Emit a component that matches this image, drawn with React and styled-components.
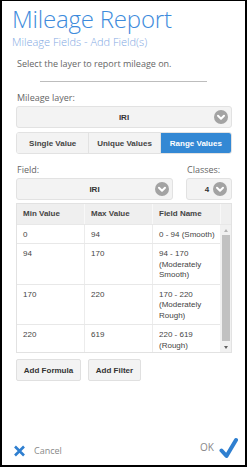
import React from "react";
import styled, { createGlobalStyle } from "styled-components";

const Global = createGlobalStyle`
  html, body { margin: 0; padding: 0; background: #fff; }
  * { box-sizing: border-box; }
`;

const Frame = styled.div`
  width: 247px;
  height: 467px;
  border: 2px solid #000;
  border-top-width: 1px;
  display: flex;
  flex-direction: column;
  background: #fff;
  font-family: "Liberation Sans", Arial, sans-serif;
  overflow: hidden;
`;

const Header = styled.div`
  padding: 3px 0 0 10px;
  font-family: "Open Sans", sans-serif;
  flex: none;
`;

const Title = styled.h1`
  margin: 0;
  font-weight: 300;
  font-size: 24px;
  line-height: 30px;
  color: #3d8bdc;
  letter-spacing: -0.2px;
`;

const Subtitle = styled.div`
  font-size: 11px;
  line-height: 16px;
  color: #82a9e3;
  font-weight: 300;
`;

const Body = styled.div`
  padding: 0 13px 0 14px;
  display: flex;
  flex-direction: column;
  flex: none;
  & > * { flex-shrink: 0; }
`;

const Intro = styled.div`
  font-family: "Open Sans", sans-serif;
  font-size: 9px;
  line-height: 14px;
  color: #666;
  margin-top: 7px;
  padding-left: 1px;
`;

const Rule = styled.div`
  height: 1px;
  background: #bdbdbd;
  margin: 10px 25px 0 24px;
`;

const Label = styled.div`
  font-family: "Open Sans", sans-serif;
  font-size: 9px;
  line-height: 14px;
  color: #666;
  padding-left: 1px;
  margin-top: ${(p) => p.$mt || 0}px;
`;

const Select = styled.div`
  position: relative;
  flex-shrink: 0;
  height: 22px;
  width: ${(p) => (p.$w ? `${p.$w}px` : "100%")};
  background: #f3f3f3;
  border: 1px solid #e2e2e2;
  border-radius: 3px;
  display: flex;
  align-items: center;
  justify-content: center;
  font-size: 8px;
  font-weight: bold;
  color: #333;
  padding-right: ${(p) => p.$pr || 0}px;
  margin-top: ${(p) => p.$mt || 0}px;
`;

const ChevronWrap = styled.span`
  position: absolute;
  right: ${(p) => p.$r || 3}px;
  top: 50%;
  transform: translateY(-50%);
  width: 14px;
  height: 14px;
  display: flex;
`;

const Chevron = ({ r }) => (
  <ChevronWrap $r={r}>
    <svg width="14" height="14" viewBox="0 0 14 14">
      <circle cx="7" cy="7" r="7" fill="#a3a3a3" />
      <path d="M4 5.8 L7 8.8 L10 5.8" fill="none" stroke="#fff" strokeWidth="2" strokeLinecap="round" strokeLinejoin="round" />
    </svg>
  </ChevronWrap>
);

const Segments = styled.div`
  display: grid;
  grid-template-columns: 1fr 1fr 1fr;
  margin-top: 4px;
  height: 22px;
  border: 1px solid #e2e2e2;
  border-radius: 3px;
  overflow: hidden;
`;

const Segment = styled.div`
  display: flex;
  align-items: center;
  justify-content: center;
  font-size: 8px;
  font-weight: bold;
  color: ${(p) => (p.$active ? "#fff" : "#444")};
  background: ${(p) => (p.$active ? "#3388d4" : "#f3f3f3")};
  border-left: ${(p) => (p.$first ? "none" : "1px solid #e2e2e2")};
`;

const FieldRow = styled.div`
  display: flex;
  gap: 13px;
  margin-top: 9px;
`;

const FieldCol = styled.div`
  display: flex;
  flex-direction: column;
  flex: ${(p) => (p.$grow ? 1 : "none")};
`;

const Table = styled.div`
  margin-top: 3px;
  border: 1px solid #e2e2e2;
  height: 150px;
  display: flex;
  flex-direction: column;
  overflow: hidden;
`;

const Row = styled.div`
  display: grid;
  grid-template-columns: 68px 68px 68px 1fr;
  border-bottom: 1px solid #e8e8e8;
  background: #efefef;
  flex: none;
`;

const Cell = styled.div`
  padding: ${(p) => (p.$head ? "5px 4px 4px 6px" : "5px 4px 3px 6px")};
  font-size: 8px;
  line-height: 10.5px;
  color: #444;
  font-weight: ${(p) => (p.$head ? "bold" : "normal")};
  border-right: 1px solid ${(p) => (p.$head ? "#f8f8f8" : "#ececec")};
`;

const BodyArea = styled.div`
  display: flex;
  flex: 1;
  min-height: 0;
`;

const Rows = styled.div`
  flex: 1;
  overflow: hidden;
`;

const BodyRow = styled.div`
  display: grid;
  grid-template-columns: 68px 68px 68px;
  border-bottom: 1px solid #e8e8e8;
`;

const Scrollbar = styled.div`
  width: 11px;
  background: #f1f1f1;
  display: flex;
  flex-direction: column;
  align-items: center;
  padding: 4px 0 3px;
`;

const Thumb = styled.div`
  width: 8px;
  flex: 1;
  background: #c1c1c1;
  margin: 3px 0 5px;
`;

const Arrow = styled.div`
  width: 0;
  height: 0;
  border-left: 2.5px solid transparent;
  border-right: 2.5px solid transparent;
  ${(p) => (p.$up ? "border-bottom: 3px solid #b5b5b5;" : "border-top: 3px solid #606060;")}
`;

const Actions = styled.div`
  display: flex;
  gap: 7px;
  margin-top: 6px;
`;

const Button = styled.button`
  height: 22px;
  width: ${(p) => p.$w}px;
  background: #f3f3f3;
  border: 1px solid #e0e0e0;
  border-radius: 2px;
  font-family: "Liberation Sans", Arial, sans-serif;
  font-size: 8px;
  font-weight: bold;
  color: #333;
  padding: 0;
`;

const Footer = styled.div`
  margin-top: auto;
  display: flex;
  justify-content: space-between;
  align-items: flex-end;
  padding: 0 7px 6px 11px;
  font-family: "Open Sans", sans-serif;
`;

const FooterBtn = styled.div`
  display: flex;
  align-items: center;
  gap: ${(p) => p.$gap}px;
  color: #888;
  font-size: ${(p) => p.$fs}px;
  padding-bottom: ${(p) => p.$pb || 0}px;
`;

const OkText = styled.span`
  padding-bottom: 3px;
`;

const rows = [
  ["0", "94", "0 - 94 (Smooth)"],
  ["94", "170", "94 - 170 (Moderately Smooth)"],
  ["170", "220", "170 - 220 (Moderately Rough)"],
  ["220", "619", "220 - 619 (Rough)"],
];

export default function App() {
  return (
    <>
      <Global />
      <Frame>
        <Header>
          <Title>Mileage Report</Title>
          <Subtitle>Mileage Fields - Add Field(s)</Subtitle>
        </Header>
        <Body>
          <Intro>Select the layer to report mileage on.</Intro>
          <Rule />
          <Label $mt={9}>Mileage layer:</Label>
          <Select $mt={1}>
            IRI
            <Chevron />
          </Select>
          <Segments>
            <Segment $first>Single Value</Segment>
            <Segment>Unique Values</Segment>
            <Segment $active>Range Values</Segment>
          </Segments>
          <FieldRow>
            <FieldCol $grow>
              <Label>Field:</Label>
              <Select $mt={1}>
                IRI
                <Chevron />
              </Select>
            </FieldCol>
            <FieldCol>
              <Label>Classes:</Label>
              <Select $w={46} $mt={1} $pr={4}>
                4
                <Chevron r={4} />
              </Select>
            </FieldCol>
          </FieldRow>
          <Table>
            <Row>
              <Cell $head>Min Value</Cell>
              <Cell $head>Max Value</Cell>
              <Cell $head>Field Name</Cell>
              <div />
            </Row>
            <BodyArea>
              <Rows>
                {rows.map((r) => (
                  <BodyRow key={r[0]}>
                    <Cell>{r[0]}</Cell>
                    <Cell>{r[1]}</Cell>
                    <Cell>{r[2]}</Cell>
                  </BodyRow>
                ))}
              </Rows>
              <Scrollbar>
                <Arrow $up />
                <Thumb />
                <Arrow />
              </Scrollbar>
            </BodyArea>
          </Table>
          <Actions>
            <Button $w={65}>Add Formula</Button>
            <Button $w={53}>Add Filter</Button>
          </Actions>
        </Body>
        <Footer>
          <FooterBtn $gap={8} $fs={9} $pb={2}>
            <svg width="13" height="12" viewBox="0 0 13 12">
              <path d="M2 1.5 L11 10.5 M11 1.5 L2 10.5" stroke="#2f7fd0" strokeWidth="2.6" strokeLinecap="butt" />
            </svg>
            Cancel
          </FooterBtn>
          <FooterBtn $gap={5} $fs={10}>
            <OkText>OK</OkText>
            <svg width="19" height="22" viewBox="0 0 19 22">
              <path d="M2.5 13.5 L7.5 19 L17 3" fill="none" stroke="#2f7fd0" strokeWidth="4" strokeLinecap="round" strokeLinejoin="round" />
            </svg>
          </FooterBtn>
        </Footer>
      </Frame>
    </>
  );
}
